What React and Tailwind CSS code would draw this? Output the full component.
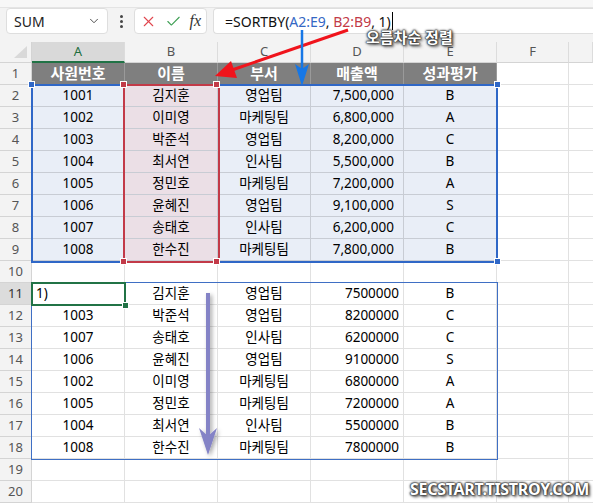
import React from 'react';
import { ChevronDown, X, Check } from 'lucide-react';

const FONT = { fontFamily: '"Noto Sans", "Noto Sans CJK KR", sans-serif' };

const source = [
  ['1001', '김지훈', '영업팀', '7,500,000', 'B'],
  ['1002', '이미영', '마케팅팀', '6,800,000', 'A'],
  ['1003', '박준석', '영업팀', '8,200,000', 'C'],
  ['1004', '최서연', '인사팀', '5,500,000', 'B'],
  ['1005', '정민호', '마케팅팀', '7,200,000', 'A'],
  ['1006', '윤혜진', '영업팀', '9,100,000', 'S'],
  ['1007', '송태호', '인사팀', '6,200,000', 'C'],
  ['1008', '한수진', '마케팅팀', '7,800,000', 'B'],
];

const sorted = [
  ['1)', '김지훈', '영업팀', '7500000', 'B'],
  ['1003', '박준석', '영업팀', '8200000', 'C'],
  ['1007', '송태호', '인사팀', '6200000', 'C'],
  ['1006', '윤혜진', '영업팀', '9100000', 'S'],
  ['1002', '이미영', '마케팅팀', '6800000', 'A'],
  ['1005', '정민호', '마케팅팀', '7200000', 'A'],
  ['1004', '최서연', '인사팀', '5500000', 'B'],
  ['1008', '한수진', '마케팅팀', '7800000', 'B'],
];

const headers = ['사원번호', '이름', '부서', '매출액', '성과평가'];
const cols = ['A', 'B', 'C', 'D', 'E', 'F', ''];
const GRID = 'grid grid-cols-[32px_93px_93px_93px_93px_93px_72px_1fr]';

function Cell({ children, className = '' }) {
  return (
    <div className={`h-[22px] border-r border-b flex items-center overflow-hidden whitespace-nowrap ${className}`}>
      {children}
    </div>
  );
}

function Row({ n }) {
  const label = (
    <div className={`h-[22px] border-r border-b border-[#d4d4d4] flex items-center justify-center text-[13px] ${n === 11 ? 'bg-[#dcdcdc] text-[#333]' : 'bg-[#f3f3f3] text-[#555]'}`}>
      {n}
    </div>
  );

  let cells;
  if (n === 1) {
    cells = headers.map((h, i) => (
      <Cell key={i} className="bg-[#7f7f7f] border-[#9a9a9a] justify-center text-white font-bold text-[15px]">{h}</Cell>
    ));
  } else if (n >= 2 && n <= 9) {
    cells = source[n - 2].map((v, i) => (
      <Cell
        key={i}
        className={`${i === 1 ? 'bg-[#ebdfe6]' : 'bg-[#e9eef7]'} border-[#c8ccd4] text-[13.5px] text-black ${i === 3 ? 'justify-end pr-[9px]' : 'justify-center'}`}
      >
        {v}
      </Cell>
    ));
  } else if (n >= 11 && n <= 18) {
    cells = sorted[n - 11].map((v, i) => (
      <Cell
        key={i}
        className={`border-[#e1e1e1] text-[13.5px] text-black ${i === 3 ? 'justify-end pr-[4px]' : v === '1)' ? 'justify-start pl-[4px]' : 'justify-center'}`}
      >
        {v}
      </Cell>
    ));
  } else {
    cells = [0, 1, 2, 3, 4].map(i => <Cell key={i} className="border-[#e1e1e1]" />);
  }

  return (
    <div className={GRID}>
      {label}
      {cells}
      <Cell className="border-[#e1e1e1]" />
      <Cell className="border-[#e1e1e1] border-r-0" />
    </div>
  );
}

function Handle({ className }) {
  return <div className={`absolute w-[7px] h-[7px] border border-white ${className}`} />;
}

export default function App() {
  return (
    <div className="w-[593px] h-[503px] bg-white overflow-hidden relative" style={FONT}>
      {/* formula bar */}
      <div className="h-[42px] bg-[#f3f3f3] border-t-[7px] border-[#f7f7f7] relative">
        <div className="absolute left-0 right-0 top-0 border-t border-[#e4e4e4]" />
        <div className="flex items-center gap-[6px] pl-[6px] pt-[1px]">
          <div className="w-[102px] h-[26px] bg-white border border-[#dedede] rounded-[4px] flex items-center justify-between pl-[7px] pr-[6px]">
            <span className="text-[14px] text-[#222]">SUM</span>
            <ChevronDown size={14} strokeWidth={1.6} className="text-[#444]" />
          </div>
          <div className="w-[14px] flex flex-col items-center gap-[2px]">
            <span className="w-[3px] h-[3px] rounded-full bg-[#444]" />
            <span className="w-[3px] h-[3px] rounded-full bg-[#444]" />
            <span className="w-[3px] h-[3px] rounded-full bg-[#444]" />
          </div>
          <div className="w-[73px] h-[26px] bg-white border border-[#dedede] rounded-[4px] flex items-center justify-between px-[5px]">
            <X size={17} strokeWidth={1.5} className="text-[#e0464e]" />
            <Check size={17} strokeWidth={1.5} className="text-[#3c9e52]" />
            <span className="text-[16px] italic text-[#333]" style={{ fontFamily: '"Liberation Serif", serif' }}>fx</span>
          </div>
          <div className="flex-1 h-[26px] bg-white border border-[#dedede] rounded-l-[4px] border-r-0 flex items-center pl-[11px] text-[14px] text-[#111]">
            <span>=SORTBY(</span>
            <span className="text-[#3467c4]">A2:E9</span>
            <span>,&nbsp;</span>
            <span className="text-[#c23a48]">B2:B9</span>
            <span>, 1)</span>
            <span className="w-px h-[18px] bg-black ml-[1px]" />
          </div>
        </div>
      </div>

      {/* sheet */}
      <div className="relative">
        <div className={GRID}>
          <div className="h-[21px] bg-[#f3f3f3] border-r border-b border-[#d4d4d4] relative">
            <div className="absolute right-[4px] bottom-[4px] w-0 h-0 border-l-[13px] border-l-transparent border-b-[12px] border-b-[#d9d9d9]" />
          </div>
          {cols.map((c, i) => (
            <div
              key={i}
              className={`h-[21px] flex items-center justify-center text-[13px] border-r border-[#dcdcdc] ${c === 'A' ? 'bg-[#d9d9d9] text-[#1e6e3e] border-b-2 border-b-[#217346]' : 'bg-[#f3f3f3] text-[#555] border-b border-b-[#d4d4d4]'}`}
            >
              {c}
            </div>
          ))}
        </div>
        {Array.from({ length: 20 }, (_, i) => <Row key={i} n={i + 1} />)}

        {/* source range A2:E9 */}
        <div className="absolute left-[31px] top-[42px] w-[467px] h-[179px] border-2 border-[#2f67c7]" />
        <Handle className="left-[28px] top-[39px] bg-[#2f67c7] w-[6px] h-[6px]" />
        <Handle className="left-[494px] top-[39px] bg-[#2f67c7]" />
        <Handle className="left-[494px] top-[216px] bg-[#2f67c7]" />

        {/* B2:B9 */}
        <div className="absolute left-[123px] top-[42px] w-[97px] h-[179px] border-2 border-[#c23a48]" />
        <Handle className="left-[120px] top-[39px] bg-[#c23a48]" />
        <Handle className="left-[213px] top-[39px] bg-[#c23a48]" />
        <Handle className="left-[120px] top-[216px] bg-[#c23a48]" />
        <Handle className="left-[213px] top-[216px] bg-[#c23a48]" />

        {/* spill range */}
        <div className="absolute left-[31px] top-[240px] w-[467px] h-[178px] border border-[#3f6fc4]" />
        {/* active cell */}
        <div className="absolute left-[31px] top-[240px] w-[95px] h-[24px] border-2 border-[#217346]" />
        <Handle className="left-[122px] top-[260px] bg-[#217346] w-[6px] h-[6px]" />
      </div>

      {/* annotations */}
      <svg className="absolute inset-0 pointer-events-none" width="593" height="503">
        <defs>
          <filter id="sh" x="-50%" y="-10%" width="200%" height="120%">
            <feDropShadow dx="2" dy="2" stdDeviation="2" floodColor="#000" floodOpacity="0.35" />
          </filter>
        </defs>
        <line x1="348" y1="30" x2="232" y2="70" stroke="#f0141c" strokeWidth="3" />
        <polygon points="215,76 237,78 231,61" fill="#f0141c" />
        <line x1="302" y1="30" x2="302" y2="70" stroke="#1677e6" strokeWidth="2.5" />
        <polygon points="302,86 295,64 302,69 309,64" fill="#1677e6" />
        <g filter="url(#sh)">
          <line x1="208" y1="293" x2="208" y2="440" stroke="#8483c6" strokeWidth="4" />
          <polygon points="208,455 199,428 208,436 217,428" fill="#8483c6" />
        </g>
      </svg>

      <div className="absolute left-[366px] top-[28px] text-[15px] leading-[18px] font-bold text-white [text-shadow:0_0_1px_#333,0_0_2px_#333,0_0_2px_#333,0_0_3px_#333,2px_2px_3px_#555]">
        오름차순 정렬
      </div>
      <div className="absolute left-[410px] top-[479px] text-[16px] leading-[20px] font-bold text-white tracking-[-0.3px] [text-shadow:0_0_1px_#333,0_0_2px_#333,0_0_2px_#333,0_0_3px_#333,2px_2px_3px_#555]">
        SECSTART.TISTROY.COM
      </div>
    </div>
  );
}
